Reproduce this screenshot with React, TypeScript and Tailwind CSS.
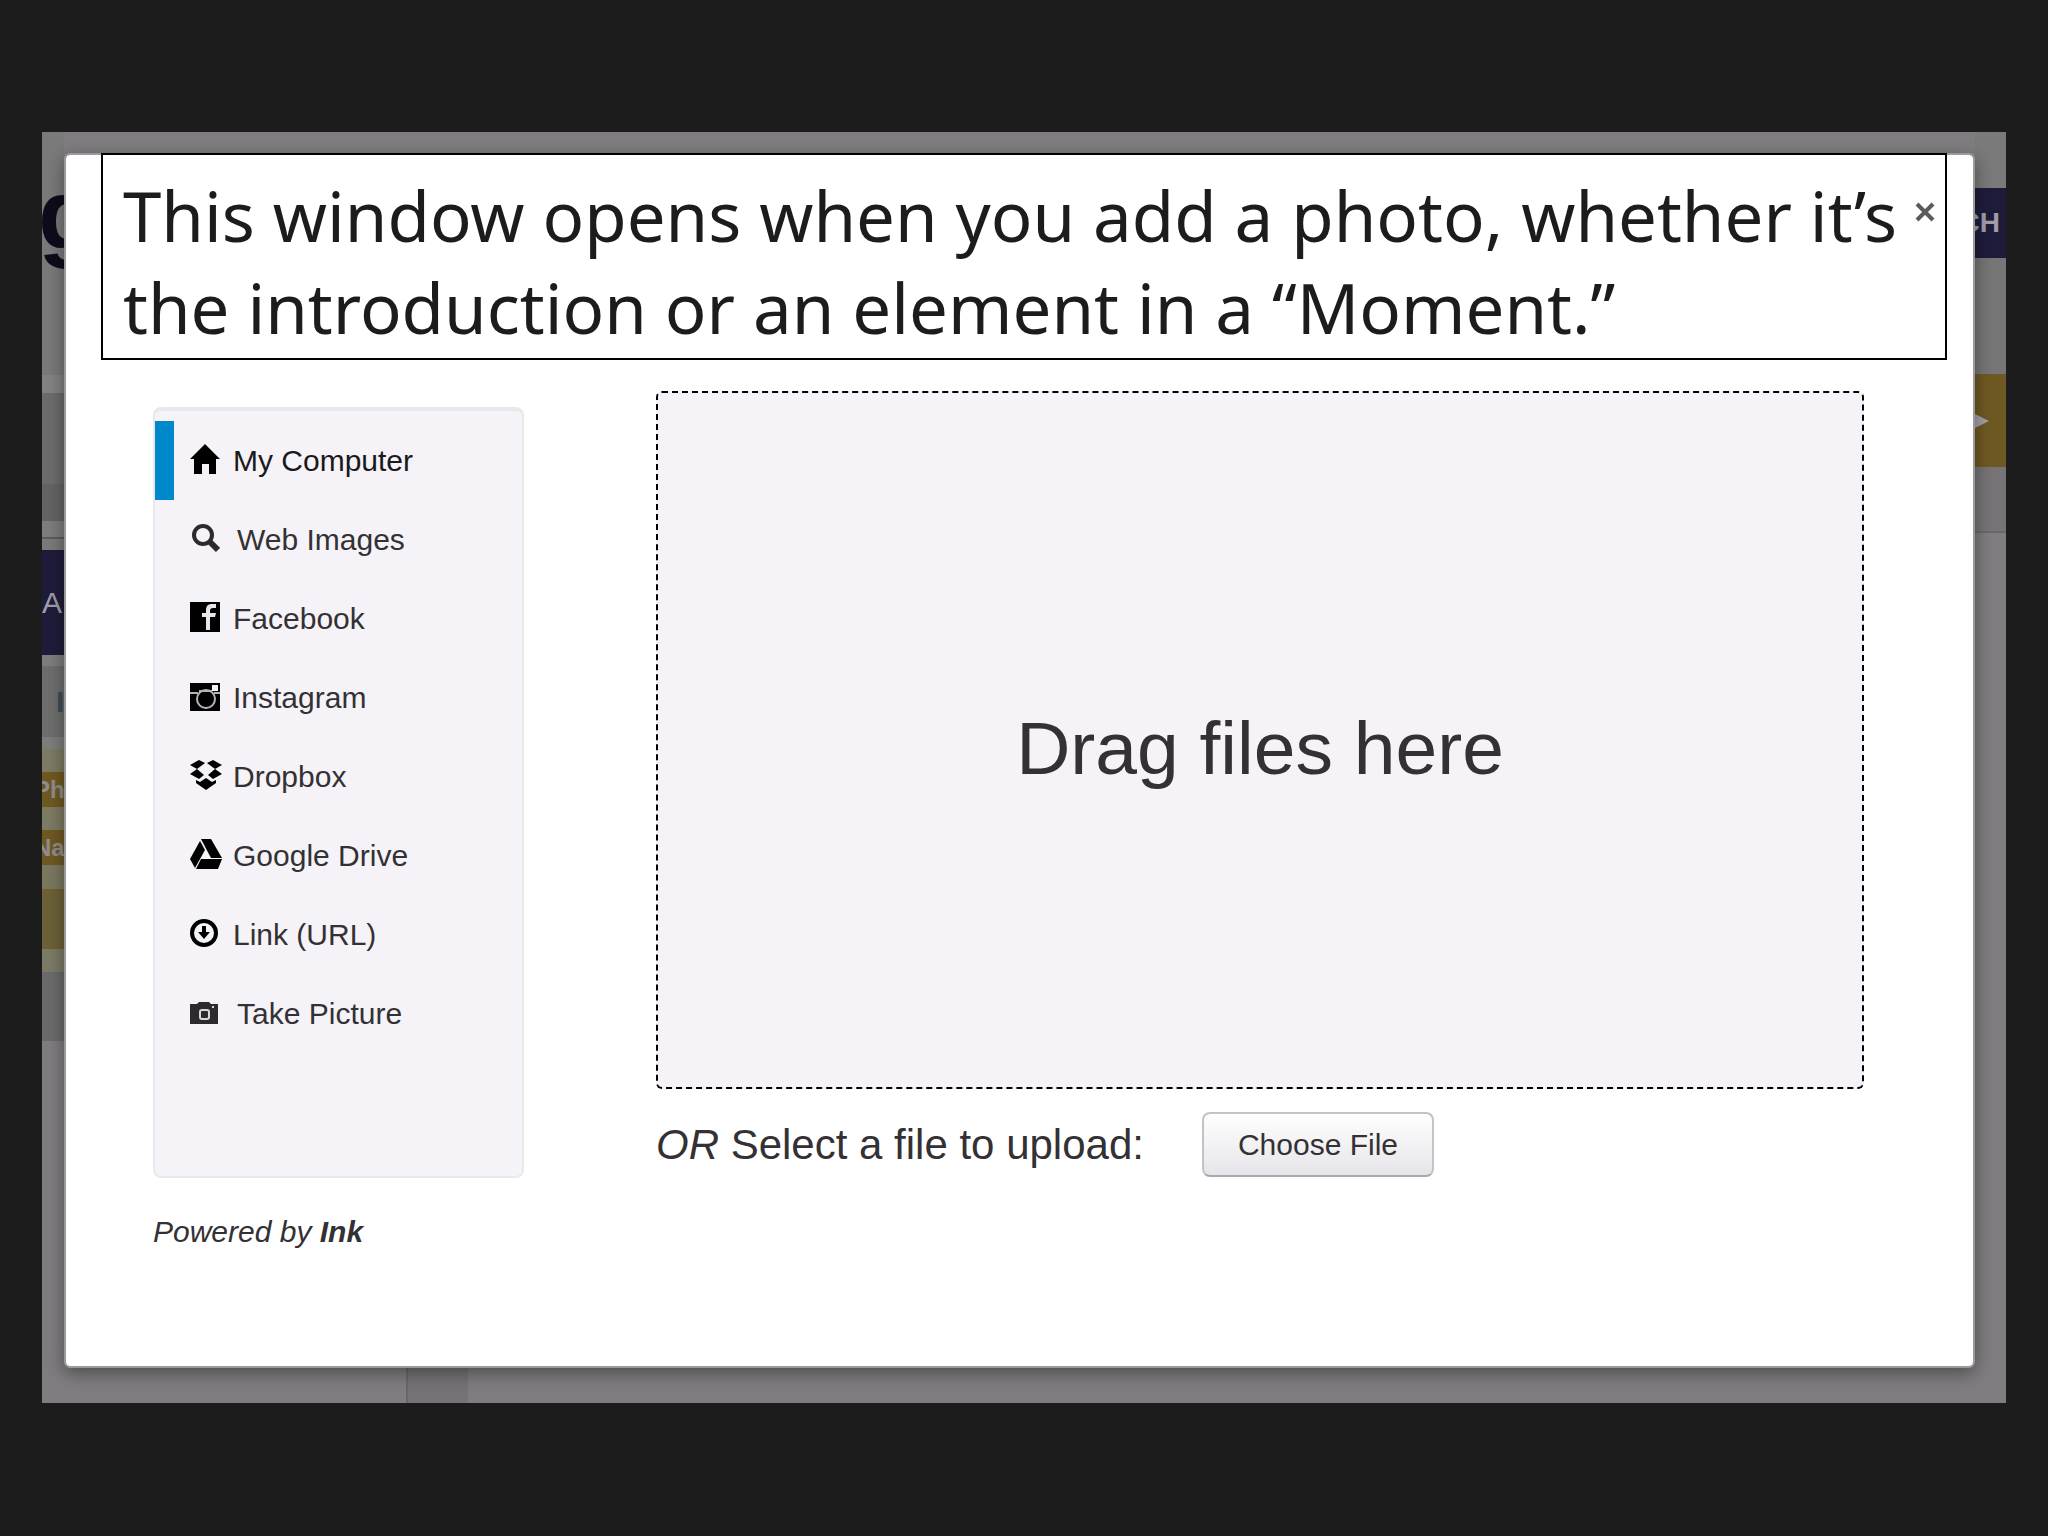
import React, { useState } from 'react';
import clsx from 'clsx';

const HomeIcon = () => (
    <svg viewBox="0 0 30 30" className="w-[30px] h-[30px]" fill="#000">
        <path d="M15 0 L30 15 H26 V30 H19 V20 H12 V30 H4 V15 H0 Z" />
    </svg>
);

const SearchIcon = () => (
    <svg viewBox="0 0 30 30" className="w-[30px] h-[30px]" fill="none" stroke="#2c2a2d">
        <circle cx="13" cy="12" r="9" strokeWidth="4" />
        <path d="M20 19 L28 27" strokeWidth="6" />
    </svg>
);

const FacebookIcon = () => (
    <svg viewBox="0 0 30 30" className="w-[30px] h-[30px]">
        <rect width="30" height="30" fill="#000" />
        <path d="M16 28 V15 H12 V11 H16 V8 C16 4 18 2 22 2 H26 V6 H23 C21 6 20 7 20 9 V11 H26 L25 15 H20 V28 Z" fill="#e8e6ea" />
    </svg>
);

const InstagramIcon = () => (
    <svg viewBox="0 0 30 30" className="w-[30px] h-[30px]">
        <rect y="2" width="30" height="28" fill="#000" />
        <rect x="22" y="4" width="6" height="6" fill="#f5f3f7" />
        <path d="M0 12 H8 M24 12 H30 M9 10 H22" stroke="#b5b3b7" strokeWidth="2" />
        <circle cx="16" cy="18" r="9" fill="none" stroke="#b5b3b7" strokeWidth="2" />
    </svg>
);

const DropboxIcon = () => (
    <svg viewBox="0 0 32 30" className="w-8 h-[30px]" fill="#000">
        <path d="M9 0 L15 3 L7 9 L0 5 Z" />
        <path d="M23 0 L17 3 L25 9 L32 5 Z" />
        <path d="M7 9 L14 15 L9 19 L0 14 Z" />
        <path d="M25 9 L18 15 L23 19 L32 14 Z" />
        <path d="M16 18 L22 22 L26 20 V23 L16 30 L6 23 V20 L10 22 Z" />
    </svg>
);

const DriveIcon = () => (
    <svg viewBox="0 0 32 30" className="w-8 h-[30px]" fill="#000">
        <path d="M10 2 L15 11 L5 29 L0 20 Z" />
        <path d="M11 0 H21 L32 19 H21 Z" />
        <path d="M11 20 H32 L28 30 H6 Z" />
    </svg>
);

const LinkIcon = () => (
    <svg viewBox="0 0 30 30" className="w-[30px] h-[30px]">
        <circle cx="14" cy="15" r="12" fill="none" stroke="#000" strokeWidth="4" />
        <path d="M12 8 H16 V14 H20 L14 21 L8 14 H12 Z" fill="#000" />
    </svg>
);

const CameraIcon = () => (
    <svg viewBox="0 0 30 30" className="w-[30px] h-[30px]">
        <path d="M0 7 H7 L9 5 H19 L21 7 H28 V27 H0 Z" fill="#2c2a2d" />
        <rect x="10" y="13" width="9" height="9" rx="2" fill="none" stroke="#d9d7db" strokeWidth="2" />
        <rect x="22" y="9" width="2" height="2" fill="#d9d7db" />
    </svg>
);

const sources = [
    { name: 'My Computer', Icon: HomeIcon },
    { name: 'Web Images', Icon: SearchIcon, sprite: true },
    { name: 'Facebook', Icon: FacebookIcon },
    { name: 'Instagram', Icon: InstagramIcon },
    { name: 'Dropbox', Icon: DropboxIcon },
    { name: 'Google Drive', Icon: DriveIcon },
    { name: 'Link (URL)', Icon: LinkIcon },
    { name: 'Take Picture', Icon: CameraIcon, sprite: true },
];

// slivers of the page that stay visible on both sides of the dialog
function LeftEdge() {
    return (
        <div className="w-[22px] shrink-0 flex flex-col overflow-hidden whitespace-nowrap text-[#8f8d8f]">
            <div className="h-[243px] pt-[34px] bg-[#7a7a7a]">
                <div className="-ml-1 text-[98px] leading-[98px] font-bold text-[#0e0c1c]">g</div>
            </div>
            <div className="h-[18px] bg-[#838383]" />
            <div className="h-[91px] bg-[#6c6c6c]" />
            <div className="h-[37px] bg-[#646464]" />
            <div className="h-4 bg-[#7d7d7d]" />
            <div className="h-[13px] bg-[#7a7a7a] border-t-2 border-[#5c5c5c]" />
            <div className="h-[105px] bg-[#1f1c3b] text-[30px] leading-[105px] text-[#a09ea8]">A</div>
            <div className="h-[11px] bg-[#7d7d7d]" />
            <div className="h-[71px] bg-[#6e6e6d] pl-[14px] text-[30px] leading-[71px] font-bold text-[#3f4c56]">I</div>
            <div className="h-3 bg-[#7d7d7d]" />
            <div className="h-[23px] bg-[#7d7b63]" />
            <div className="h-[35px] bg-[#6f5922] text-2xl leading-[35px] font-bold">
                <span className="-ml-2">Pho</span>
            </div>
            <div className="h-[23px] bg-[#7d7b63]" />
            <div className="h-[35px] bg-[#6f5922] text-2xl leading-[35px] font-bold">
                <span className="-ml-2">Na</span>
            </div>
            <div className="h-6 bg-[#7a785f]" />
            <div className="h-[60px] bg-[#6d6137]" />
            <div className="h-[23px] bg-[#7d7b66]" />
            <div className="h-[69px] bg-[#6c6b6c]" />
            <div className="flex-1 bg-[#7f7d7f]" />
        </div>
    );
}

function RightEdge() {
    return (
        <div className="w-[31px] shrink-0 flex flex-col overflow-hidden whitespace-nowrap">
            <div className="h-14 bg-[#7a7a7a]" />
            <div className="h-[70px] bg-[#1f1c3b] flex items-center justify-end pr-[6px] text-[28px] font-bold text-[#a09ea8]">CH</div>
            <div className="h-[116px] bg-[#767676]" />
            <div className="h-[93px] bg-[#6f5922] flex items-center">
                <svg viewBox="0 0 14 14" className="w-[14px] h-[14px]" fill="#a39fa6">
                    <path d="M0 0 L14 7 L0 14 Z" />
                </svg>
            </div>
            <div className="h-[66px] bg-[#767476] border-b-2 border-[#6a686a]" />
            <div className="flex-1 bg-[#7f7d7f]" />
        </div>
    );
}

function App() {
    const [active, setActive] = useState('My Computer');

    return (
        <div className="min-h-screen bg-[#1d1c1d] px-[42px] py-[132px] font-['Liberation_Sans',Arial,sans-serif] text-[#333134]">
            <div className="relative flex overflow-hidden bg-[#7f7d7f]">
                <LeftEdge />
                <div className="absolute bottom-0 left-[364px] w-[62px] h-10 bg-[#757375] border-l-2 border-[#696769]" />

                <div role="dialog" aria-label="Add a photo" className="relative flex-1 mt-[21px] mb-[35px] bg-white bg-clip-padding border-2 border-[#9b999b] rounded-md shadow-[0_5px_18px_rgba(0,0,0,0.4)]">
                    <div className="relative -mt-[2px] ml-[35px] mr-[26px] h-[207px] border-2 border-black bg-white pl-5 pt-[14px]">
                        <p className="font-['Noto_Sans',sans-serif] text-[69px] leading-[92px] text-[#1c1b1d] whitespace-nowrap">
                            This window opens when you add a photo, whether it’s
                            <br />
                            the introduction or an element in a “Moment.”
                        </p>
                        <button type="button" aria-label="Close" className="absolute right-[10px] top-[47px] cursor-pointer">
                            <svg viewBox="0 0 20 20" className="w-5 h-5" stroke="#5b595c" strokeWidth="4">
                                <path d="M2 2 L18 18 M18 2 L2 18" />
                            </svg>
                        </button>
                    </div>

                    <div className="flex items-start justify-between gap-[132px] pt-[31px] pl-[87px] pr-[109px] pb-[116px]">
                        <div className="mt-4 w-[371px] shrink-0">
                            <ul className="rounded-lg border-2 border-t-4 border-[#e9e8eb] bg-[#f5f3f7] pt-[10px] pb-[123px]">
                                {sources.map(({ name, Icon, sprite }) => (
                                    <li key={name}>
                                        <a
                                            href="#"
                                            onClick={(e) => {
                                                e.preventDefault();
                                                setActive(name);
                                            }}
                                            className={clsx(
                                                'flex items-center h-[79px] pl-4 border-l-[19px] text-[30px] leading-9',
                                                active === name ? 'border-[#0088cc] text-[#1a191b]' : 'border-transparent'
                                            )}
                                        >
                                            <span className="w-[43px] shrink-0 pb-1">
                                                <Icon />
                                            </span>
                                            <span className={clsx(sprite && 'pl-1')}>{name}</span>
                                        </a>
                                    </li>
                                ))}
                            </ul>
                            <p className="mt-9 text-[30px] leading-9 italic">
                                Powered by <a href="#" className="font-bold">Ink</a>
                            </p>
                        </div>

                        <div className="flex-1">
                            <div className="h-[698px] rounded-md border-2 border-dashed border-black bg-[#f5f3f7] flex items-center justify-center pt-4 text-[75px]">
                                Drag files here
                            </div>
                            <div className="mt-[23px] flex items-center gap-[58px]">
                                <label htmlFor="choose" className="text-[42px] leading-[48px]">
                                    <em>OR</em> Select a file to upload:
                                </label>
                                <button
                                    id="choose"
                                    type="button"
                                    className="h-[65px] w-[232px] rounded-lg border-2 border-[#c4c2c5] border-b-[#aaa8ab] bg-linear-to-b from-white to-[#e6e4e8] text-[30px] cursor-pointer"
                                >
                                    Choose File
                                </button>
                            </div>
                        </div>
                    </div>
                </div>

                <RightEdge />
            </div>
        </div>
    );
}

export default App;
